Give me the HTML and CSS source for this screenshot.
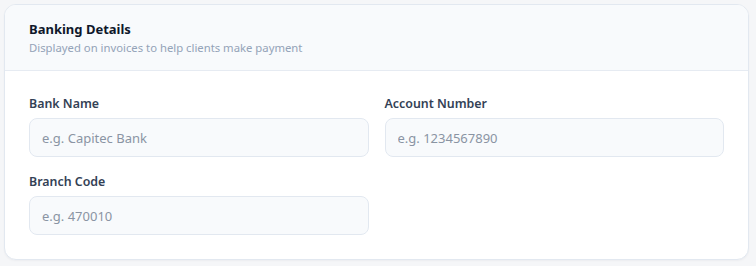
FILE: index.html
```html
<!DOCTYPE html>
<html>
<head>
<meta charset="utf-8">
<link rel="stylesheet" href="styles.css">
</head>
<body>
<div class="card">
  <div class="card-header">
    <div class="title">Banking Details</div>
    <div class="subtitle">Displayed on invoices to help clients make payment</div>
  </div>
  <div class="card-body">
    <div class="field">
      <label class="label">Bank Name</label>
      <input class="input" type="text" placeholder="e.g. Capitec Bank">
    </div>
    <div class="field">
      <label class="label">Account Number</label>
      <input class="input" type="text" placeholder="e.g. 1234567890">
    </div>
    <div class="field">
      <label class="label">Branch Code</label>
      <input class="input" type="text" placeholder="e.g. 470010">
    </div>
  </div>
</div>
</body>
</html>
```
FILE: styles.css
```css
html, body {
  margin: 0;
  padding: 0;
  background: #f5f6f8;
}
body {
  padding: 4px 7px 6px 4px;
  font-family: "Noto Sans", "Open Sans", sans-serif;
}
.card {
  background: #ffffff;
  border: 1px solid #e2e8f0;
  border-radius: 12px;
  overflow: hidden;
  box-shadow: 0 1px 2px rgba(15, 23, 42, 0.04);
}
.card-header {
  background: #f8fafc;
  border-bottom: 1px solid #e6ebf2;
  padding: 15px 24px 14px;
}
.title {
  font-size: 13px;
  font-weight: 700;
  color: #0f172a;
  line-height: 18px;
}
.subtitle {
  margin-top: 2px;
  font-size: 11.3px;
  color: #94a3b8;
  line-height: 16px;
}
.card-body {
  padding: 24px 24px 24px;
  display: grid;
  grid-template-columns: 1fr 1fr;
  column-gap: 16px;
  row-gap: 16px;
}
.field {
  display: flex;
  flex-direction: column;
}
.label {
  font-size: 12.4px;
  font-weight: 600;
  color: #334155;
  line-height: 18px;
  margin-bottom: 5px;
}
.input {
  box-sizing: border-box;
  height: 39px;
  border: 1px solid #e2e8f0;
  border-radius: 8px;
  background: #f8fafc;
  padding: 0 12px;
  font-family: inherit;
  font-size: 13px;
  color: #334155;
  outline: none;
}
.input::placeholder {
  color: #8a94a3;
}
```
